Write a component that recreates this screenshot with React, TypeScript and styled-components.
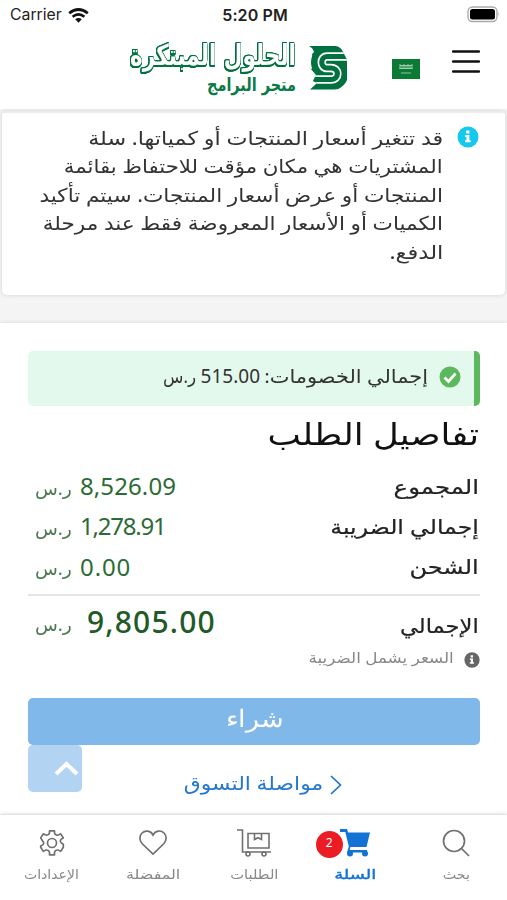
import React from 'react';
import styled, { createGlobalStyle } from 'styled-components';

const GlobalStyle = createGlobalStyle`
  * { box-sizing: border-box; }
  body { margin: 0; background: #fff; }
`;

const Screen = styled.div`
  width: 507px;
  height: 900px;
  display: flex;
  flex-direction: column;
  overflow: hidden;
  background: #f4f4f4;
  font-family: 'Noto Sans', 'DejaVu Sans', sans-serif;
`;

const StatusBar = styled.div`
  flex: none;
  height: 30px;
  padding: 0 7px 0 10px;
  display: grid;
  grid-template-columns: 1fr auto 1fr;
  align-items: center;
  background: #fff;
  color: #222;
  font: 16px/30px Inter, sans-serif;
`;

const Carrier = styled.div`
  display: flex;
  align-items: center;
  gap: 6px;
  height: 30px;
  font-size: 15.8px;
`;

const Clock = styled.div`
  font-weight: 600;
  letter-spacing: 0.1px;
`;

const BatterySlot = styled.div`
  display: flex;
  justify-content: flex-end;
  padding-bottom: 2px;
`;

const Header = styled.header`
  flex: none;
  height: 79px;
  padding: 0 27px 0 126px;
  display: flex;
  align-items: flex-start;
  background: #fff;
`;

const LogoSlot = styled.div`
  width: 266px;
  padding-top: 8px;
`;

const LogoSvg = styled.svg`
  overflow: visible;
`;

const LogoTitle = styled.text`
  font: 700 29px 'DejaVu Sans', sans-serif;
  fill: #fff;
  filter: drop-shadow(0.7px 0 0 #00713f) drop-shadow(-0.7px 0 0 #00713f) drop-shadow(0 -0.6px 0 #00713f)
    drop-shadow(0.8px 1.2px 0 #00713f) drop-shadow(0.5px 1px 0 #00713f);
`;

const FlagSlot = styled.div`
  padding-top: 29px;
  width: 60px;
`;

const MenuButton = styled.button`
  border: 0;
  padding: 19px 0 0;
  background: none;
`;

const Notice = styled.section`
  flex: none;
  height: 184px;
  margin: 2px 2px 0;
  padding: 13px 26px 0 0;
  display: flex;
  flex-direction: row-reverse;
  gap: 14px;
  background: #fff;
  border-top: 2px solid #ececec;
  border-radius: 3px 3px 5px 5px;
  box-shadow: 0 0 4px rgba(0, 0, 0, 0.14);
`;

const NoticeLines = styled.div`
  display: flex;
  flex-direction: column;
  align-items: flex-end;
  margin-top: -2px;
`;

const NoticeIcon = styled.div`
  width: 22px;
`;

const Text = styled.span<{ $size: number; $sx?: number; $color?: string; $bold?: number; $line?: number; $origin?: string; $width?: number }>`
  display: block;
  direction: rtl;
  white-space: nowrap;
  width: ${(p) => (p.$width ? `${p.$width}px` : 'auto')};
  font-size: ${(p) => p.$size}px;
  line-height: ${(p) => p.$line ?? 28.4}px;
  color: ${(p) => p.$color ?? '#333'};
  -webkit-text-stroke: ${(p) => p.$bold ?? 0}px currentColor;
  transform: scaleX(${(p) => p.$sx ?? 1});
  transform-origin: ${(p) => p.$origin ?? 'right'};
`;

const Summary = styled.section`
  flex: none;
  height: 492px;
  margin-top: 28px;
  padding: 28px 27px 0 28px;
  display: flex;
  flex-direction: column;
  background: #fff;
  box-shadow: 0 0 4px rgba(0, 0, 0, 0.12);
`;

const Discount = styled.div`
  flex: none;
  height: 55px;
  padding: 0 13px 3px 0;
  display: flex;
  flex-direction: row-reverse;
  align-items: center;
  gap: 11px;
  background: #e3f9ed;
  border-right: 6px solid #5cb85c;
  border-radius: 5px;
`;

const DiscountText = styled.div`
  display: flex;
  flex-direction: row-reverse;
  gap: 5px;
  margin-top: -1px;
`;

const Amount = styled.span<{ $size: number; $color: string; $weight?: number; $spacing?: number }>`
  font-size: ${(p) => p.$size}px;
  font-weight: ${(p) => p.$weight ?? 400};
  line-height: 28px;
  letter-spacing: ${(p) => p.$spacing ?? 0}px;
  color: ${(p) => p.$color};
`;

const Title = styled.h1`
  flex: none;
  height: 60px;
  margin: 0 1px 0 0;
  font-weight: 400;
`;

const Row = styled.div<{ $height: number }>`
  flex: none;
  height: ${(p) => p.$height}px;
  padding: 2px 1px 0 7px;
  display: flex;
  align-items: center;
  justify-content: space-between;
`;

const TotalLabel = styled.div`
  padding-top: 6px;
`;

const Price = styled.div<{ $gap: number }>`
  display: flex;
  align-items: center;
  gap: ${(p) => p.$gap}px;
  margin-top: -2px;
`;

const Currency = styled.div`
  width: 38px;
  padding-top: 4px;
  display: flex;
`;

const Divider = styled.hr`
  flex: none;
  width: 100%;
  height: 2px;
  margin: 7px 0 0;
  border: 0;
  background: #e5e5e5;
`;

const TaxNote = styled.div`
  flex: none;
  height: 23px;
  display: flex;
  flex-direction: row-reverse;
  align-items: center;
  gap: 10px;
`;

const TaxText = styled.div`
  margin-top: -5px;
`;

const BuyButton = styled.button`
  flex: none;
  height: 47px;
  margin: 27px 0 0;
  padding: 0 0 4px;
  display: flex;
  align-items: center;
  justify-content: center;
  border: 0;
  border-radius: 5px;
  background: #80b8e9;
`;

const Actions = styled.div`
  display: flex;
  align-items: flex-start;
`;

const ScrollTop = styled.button`
  width: 54px;
  height: 47px;
  padding: 0 3px 0 0;
  display: flex;
  align-items: center;
  justify-content: flex-end;
  border: 0;
  border-radius: 5px;
  background: #b2d3f1;
`;

const ContinueLink = styled.a`
  margin: 27px 0 0 100px;
  width: 160px;
  display: flex;
  flex-direction: row-reverse;
  align-items: center;
  gap: 7px;
`;

const LinkText = styled.div`
  margin-top: -3px;
`;

const TabBar = styled.nav`
  flex: none;
  height: 85px;
  display: grid;
  grid-template-columns: repeat(5, 101.2px);
  padding-left: 1px;
  background: #fff;
  box-shadow: 0 0 4px rgba(0, 0, 0, 0.28);
  z-index: 1;
`;

const Tab = styled.div`
  position: relative;
  padding-top: 14px;
  display: flex;
  flex-direction: column;
  align-items: center;
  gap: 5px;
`;

const Badge = styled.span`
  position: absolute;
  left: 11px;
  top: 16px;
  width: 27px;
  height: 27px;
  border-radius: 50%;
  background: #ec1c24;
  color: #fff;
  font-size: 12px;
  line-height: 23px;
  text-align: center;
`;

const InfoIcon = ({ size, color }: { size: number; color: string }) => (
  <svg width={size} height={size} viewBox="0 0 22 22">
    <circle cx="11" cy="11" r="10.5" fill={color} />
    <path d="M9.2 4.6h3.2v2.8H9.2zM8.2 9h4.2v5.2h1.3v2H8v-2h1.4V11H8.2z" fill="#fff" />
  </svg>
);

const ribbon = 'M350 56.500H327C320 56.500 320 68 327 68H331C339.500 68 339.500 79.500 331 79.500H305';

const Logo = () => (
  <LogoSvg width="224" height="62" viewBox="126 38 224 62">
    <g direction="rtl" textAnchor="start">
      <LogoTitle x="296" y="65" textLength="166" lengthAdjust="spacingAndGlyphs">الحلول المبتكرة</LogoTitle>
      <text x="296" y="91" fontFamily="DejaVu Sans" fontSize="18" fontWeight="700" textLength="89" lengthAdjust="spacingAndGlyphs" fill="#0b7a48">متجر البرامج</text>
    </g>
    <clipPath id="mark">
      <path d="M309 46H336Q341 47 343 52L347 60V89.500H310L317 83 313 81 316 75 305 62 314 52Q313 48 309 46Z" />
    </clipPath>
    <g clipPath="url(#mark)" fill="none">
      <path d="M309 46H330V57H313Z" fill="#00713f" />
      <path d={ribbon} stroke="#00713f" strokeWidth="21.500" />
      <path d={ribbon} stroke="#fff" strokeWidth="8.500" />
      <path d={ribbon} stroke="#00713f" strokeWidth="5.200" />
    </g>
  </LogoSvg>
);

const SearchIcon = () => (
  <svg width="28" height="28" viewBox="0 0 28 28" fill="none" stroke="#707070" strokeWidth="1.7">
    <circle cx="12" cy="12" r="10.500" /><path d="M19.500 19.500L27 27" />
  </svg>
);

const CartIcon = () => (
  <svg width="32" height="28" viewBox="0 0 32 28" fill="#1273d4">
    <path d="M1 0h7l1.200 3.500H31L27.500 18H11.500l-.8 3H28v2.500H8l1.800-6L6.300 3H1z" />
    <circle cx="11" cy="24.500" r="3" /><circle cx="26" cy="24.500" r="3" />
  </svg>
);

const OrdersIcon = () => (
  <svg width="34" height="28" viewBox="0 0 34 28" fill="none" stroke="#707070" strokeWidth="1.600">
    <path d="M0 1h5.500v22H34M11 4.500h21v14.500H11zM17.500 4.500v6l3.500-1.800 3.500 1.800v-6" />
    <circle cx="11" cy="25" r="2" /><circle cx="27" cy="25" r="2" />
  </svg>
);

const HeartIcon = () => (
  <svg width="28" height="28" viewBox="0 0 28 28" fill="none" stroke="#707070" strokeWidth="1.700">
    <path d="M14 6C11.500 1.200 6 1.200 3 4S.5 11.500 3 14.500L14 25 25 14.500C27.500 11.500 28 7 25 4s-8.500-2.800-11 2z" />
  </svg>
);

const GearIcon = () => (
  <svg width="28" height="28" viewBox="0 0 28 28" fill="none" stroke="#707070" strokeWidth="1.700" strokeLinejoin="round">
    <path d="M11.500 1.500h5v2.200q.3 1.300 1.700 1.900t2.600 0l1.900-1.100 2.600 4.300-1.900 1.200q-1.100.9-1.100 2t1.100 2l1.900 1.200v3.300l-2.600 4.300-1.900-1.100q-1.300-.6-2.600 0t-1.700 1.900v2.900h-5v-2.900q-.4-1.300-1.700-1.900t-2.600 0l-1.900 1.100-2.600-4.300v-1.300l1.900-1.200q1.100-.9 1.100-2t-1.100-2L2.700 8.800l2.600-4.300 1.900 1.100q1.300.6 2.600 0t1.700-1.900z" transform="translate(0 .5) scale(1 .96)" />
    <circle cx="14" cy="14" r="4.500" />
  </svg>
);

const noticeLines = [
  { text: 'قد تتغير أسعار المنتجات أو كمياتها. سلة', sx: 1.171 },
  { text: 'المشتريات هي مكان مؤقت للاحتفاظ بقائمة', sx: 1.122 },
  { text: 'المنتجات أو عرض أسعار المنتجات. سيتم تأكيد', sx: 1.14 },
  { text: 'الكميات أو الأسعار المعروضة فقط عند مرحلة', sx: 1.137 },
  { text: 'الدفع.', sx: 1.19 },
];

const rows = [
  { label: 'المجموع', amount: '8,526.09', height: 40, sx: 1.22, spacing: 0.1 },
  { label: 'إجمالي الضريبة', amount: '1,278.91', height: 40, sx: 1.18, spacing: -1.2 },
  { label: 'الشحن', amount: '0.00', height: 41, sx: 1.2, spacing: 0.9 },
];

const tabs = [
  { label: 'الإعدادات', icon: <GearIcon />, sx: 1.08 },
  { label: 'المفضلة', icon: <HeartIcon />, sx: 1.23 },
  { label: 'الطلبات', icon: <OrdersIcon />, sx: 1.13 },
  { label: 'السلة', icon: <CartIcon />, sx: 1.38, badge: '2' },
  { label: 'بحث', icon: <SearchIcon />, sx: 1.1 },
];

const CurrencyMark = () => (
  <Currency><Text $size={18} $color="#4c7a54" $origin="left" $sx={1.04}>ر.س</Text></Currency>
);

export default function App() {
  return (
    <Screen>
      <GlobalStyle />
      <StatusBar>
        <Carrier>
          <span>Carrier</span>
          <svg width="21" height="15" viewBox="0 0 21 15" fill="none" stroke="#111" strokeWidth="2.700">
            <path d="M1.200 5.300Q10.500-2.300 19.800 5.300M4.600 8.700Q10.500 4 16.400 8.700" />
            <path d="M7.200 11.300Q10.500 8.700 13.800 11.300L10.500 14.700z" fill="#111" stroke="none" />
          </svg>
        </Carrier>
        <Clock>5:20 PM</Clock>
        <BatterySlot>
          <svg width="33" height="17" viewBox="0 0 33 17">
            <rect x="1" y="1" width="29" height="14.500" rx="4.500" fill="#fff" stroke="#aaa" strokeWidth="1.400" />
            <rect x="3" y="3" width="25" height="10.500" rx="2.500" fill="#000" />
            <path d="M31.300 6q1.500 2 0 4z" fill="#aaa" />
          </svg>
        </BatterySlot>
      </StatusBar>
      <Header>
        <LogoSlot><Logo /></LogoSlot>
        <FlagSlot>
          <svg width="28" height="20" viewBox="0 0 28 20">
            <rect width="28" height="20" fill="#0b7a35" />
            <path d="M8 5v5M10 6v4M12 5v5M14 6v4M16 5v5M18 6v4M20 5v5M7.500 9.500h13M8 6.500h12" stroke="#a9d3b8" strokeWidth=".9" />
            <path d="M9 14h10" stroke="#8cc4a0" />
          </svg>
        </FlagSlot>
        <MenuButton aria-label="Menu">
          <svg width="28" height="25" viewBox="0 0 28 25" stroke="#111" strokeWidth="2.300" strokeLinecap="round"><path d="M1 2.500h26M1 12.500h26M1 22.500h26" /></svg>
        </MenuButton>
      </Header>
      <Notice>
        <NoticeIcon><InfoIcon size={22} color="#14c8ee" /></NoticeIcon>
        <NoticeLines>
          {noticeLines.map((l) => <Text key={l.text} $size={19} $sx={l.sx}>{l.text}</Text>)}
        </NoticeLines>
      </Notice>
      <Summary>
        <Discount>
          <svg width="22" height="22" viewBox="0 0 22 22"><circle cx="11" cy="11" r="10.500" fill="#5cb85c" /><path d="M5.500 11.500l4 4 7-8" fill="none" stroke="#fff" strokeWidth="2.700" /></svg>
          <DiscountText>
            <Text $size={18.5} $width={163} $sx={1.13}>إجمالي الخصومات:</Text>
            <Amount $size={19} $color="#333">515.00</Amount>
            <Text $size={18} $width={36} $sx={0.93}>ر.س</Text>
          </DiscountText>
        </Discount>
        <Title><Text $size={30} $line={56} $sx={1.18} $color="#111">تفاصيل الطلب</Text></Title>
        {rows.map((r) => (
          <Row key={r.label} $height={r.height}>
            <Price $gap={7}><CurrencyMark /><Amount $size={24} $spacing={r.spacing} $color="#2c6b35">{r.amount}</Amount></Price>
            <Text $size={20} $color="#222" $sx={r.sx} $bold={0.2}>{r.label}</Text>
          </Row>
        ))}
        <Divider />
        <Row $height={52}>
          <Price $gap={14}><CurrencyMark /><Amount $size={30} $weight={500} $spacing={1.2} $color="#1f5a28">9,805.00</Amount></Price>
          <TotalLabel><Text $size={20} $color="#222" $sx={1.13} $bold={0.2}>الإجمالي</Text></TotalLabel>
        </Row>
        <TaxNote>
          <InfoIcon size={16} color="#666" />
          <TaxText><Text $size={15} $color="#888" $sx={1.12}>السعر يشمل الضريبة</Text></TaxText>
        </TaxNote>
        <BuyButton><Text $size={24} $color="#fff" $origin="center" $sx={1.13}>شراء</Text></BuyButton>
        <Actions>
          <ScrollTop aria-label="Top"><svg width="25" height="15" viewBox="0 0 25 15" fill="none" stroke="#fff" strokeWidth="4"><path d="M2 13L12.500 3 23 13" /></svg></ScrollTop>
          <ContinueLink>
            <svg width="12" height="20" viewBox="0 0 12 20" fill="none" stroke="#1976d2" strokeWidth="1.700"><path d="M1 1l9.500 9L1 19" /></svg>
            <LinkText><Text $size={19} $color="#2478d0" $sx={1.15}>مواصلة التسوق</Text></LinkText>
          </ContinueLink>
        </Actions>
      </Summary>
      <TabBar>
        {tabs.map((t) => (
          <Tab key={t.label}>
            {t.icon}
            <Text $size={13} $line={24} $sx={t.sx} $origin="center" $bold={t.badge ? 0.4 : 0} $color={t.badge ? '#1273d4' : '#888'}>{t.label}</Text>
            {t.badge && <Badge>{t.badge}</Badge>}
          </Tab>
        ))}
      </TabBar>
    </Screen>
  );
}
